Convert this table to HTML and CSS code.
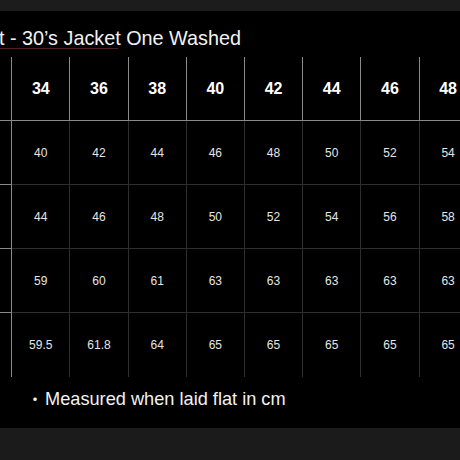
FILE: index.html
```html
<!DOCTYPE html>
<html>
<head>
<meta charset="utf-8">
<link rel="stylesheet" href="styles.css">
</head>
<body>
<div class="topbar"></div>
<div class="main">
  <div class="title">t - 30’s Jacket One Washed</div>
  <div class="underline"></div>
  <div class="table">
    <div class="cell head first"></div>
    <div class="cell head">34</div><div class="cell head">36</div><div class="cell head">38</div><div class="cell head">40</div><div class="cell head">42</div><div class="cell head">44</div><div class="cell head">46</div><div class="cell head">48</div>

    <div class="cell first"></div>
    <div class="cell">40</div><div class="cell">42</div><div class="cell">44</div><div class="cell">46</div><div class="cell">48</div><div class="cell">50</div><div class="cell">52</div><div class="cell">54</div>

    <div class="cell first r63"></div>
    <div class="cell r63">44</div><div class="cell r63">46</div><div class="cell r63">48</div><div class="cell r63">50</div><div class="cell r63">52</div><div class="cell r63">54</div><div class="cell r63">56</div><div class="cell r63">58</div>

    <div class="cell first"></div>
    <div class="cell">59</div><div class="cell">60</div><div class="cell">61</div><div class="cell">63</div><div class="cell">63</div><div class="cell">63</div><div class="cell">63</div><div class="cell">63</div>

    <div class="cell first last"></div>
    <div class="cell last">59.5</div><div class="cell last">61.8</div><div class="cell last">64</div><div class="cell last">65</div><div class="cell last">65</div><div class="cell last">65</div><div class="cell last">65</div><div class="cell last">65</div>
  </div>
  <div class="note"><span class="dot">・</span>Measured when laid flat in cm</div>
</div>
<div class="bottombar"></div>
</body>
</html>
```

FILE: styles.css
```css
html, body {
  margin: 0;
  padding: 0;
  overflow: hidden;
  background: #1b1b1b;
  font-family: "Liberation Sans", Arial, sans-serif;
}
.topbar {
  height: 11px;
  background: #1c1c1c;
}
.main {
  height: 417px;
  background: #000;
  overflow: hidden;
  padding-top: 16px;
  box-sizing: border-box;
}
.title {
  color: #f2f2f2;
  font-size: 19.8px;
  line-height: 22px;
  margin-left: -1px;
  white-space: nowrap;
}
.underline {
  width: 118px;
  height: 1px;
  margin-top: -1px;
  background: #4a2020;
}
.table {
  display: grid;
  grid-template-columns: repeat(9, 58.2px);
  grid-auto-rows: 64px;
  margin-left: -46px;
  margin-top: 8px;
  width: 524px;
}
.cell {
  display: flex;
  align-items: center;
  justify-content: center;
  color: #e6e6e6;
  font-size: 12px;
  border-right: 1px solid #2e2e2e;
  border-bottom: 1px solid #2e2e2e;
}
.cell.r63 {
  height: 63px;
}
.cell.head {
  color: #fff;
  font-weight: bold;
  font-size: 16px;
  border-right-color: #8a8a8a;
  border-bottom-color: #8a8a8a;
}
.cell.first {
  border-right-color: #8a8a8a;
  border-bottom-color: #8a8a8a;
}
.cell.last {
  border-bottom: none;
}
.note {
  margin-top: 9px;
  margin-left: 27px;
  color: #f2f2f2;
  font-size: 18.2px;
  line-height: 24px;
  white-space: nowrap;
}
.dot {
  font-family: "Noto Sans CJK JP", sans-serif;
  font-size: 16px;
  margin-right: 2px;
}
```
